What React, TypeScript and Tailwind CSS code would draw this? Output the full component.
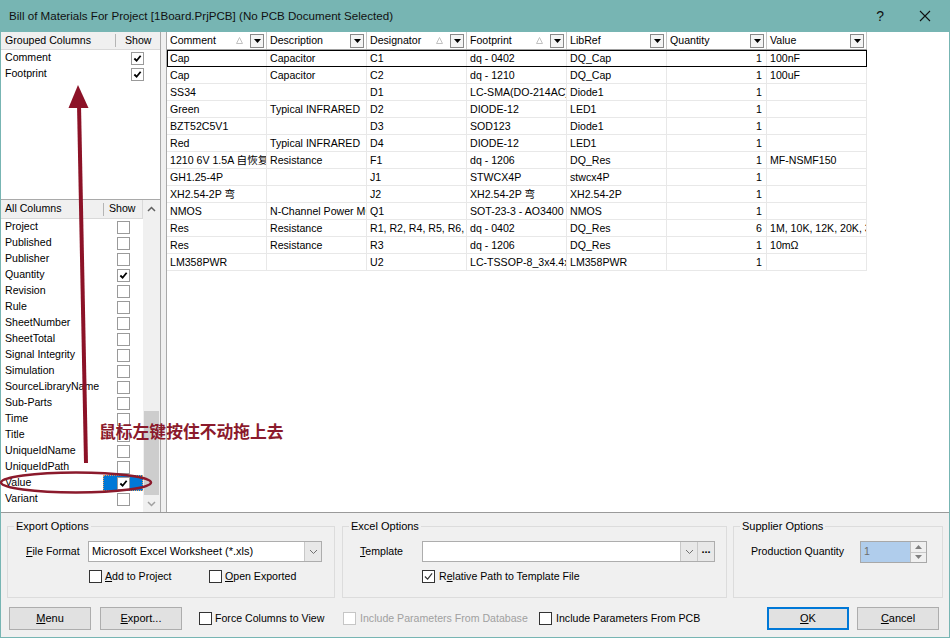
import React from "react";

const UI = "font-['Liberation_Sans','Noto_Sans_CJK_SC',Arial,sans-serif]";

const Check = ({ w = 9 }: { w?: number }) => (
  <svg width={w} height={w} viewBox="0 0 10 10">
    <path d="M1.5 5 L4 7.5 L8.5 2" fill="none" stroke="#000" strokeWidth="2" />
  </svg>
);

// small list checkbox (column chooser panels)
const ListBox = ({ checked }: { checked?: boolean }) => (
  <span className="flex h-[13px] w-[13px] items-center justify-center border border-[#9a9a9a] bg-white">
    {checked && <Check />}
  </span>
);

// dialog checkbox
const Box = ({ checked, disabled }: { checked?: boolean; disabled?: boolean }) => (
  <span
    className={
      disabled
        ? "flex h-[13px] w-[13px] shrink-0 items-center justify-center border border-[#c6c6c6] bg-white"
        : "flex h-[13px] w-[13px] shrink-0 items-center justify-center border border-[#333] bg-white"
    }
  >
    {checked && (
      <svg width="9" height="9" viewBox="0 0 10 10">
        <path d="M1 5 L4 8 L9 1.5" fill="none" stroke="#333" strokeWidth="1.3" />
      </svg>
    )}
  </span>
);

const Chevron = () => (
  <svg width="9" height="6" viewBox="0 0 9 6">
    <path d="M1 1 L4.5 4.5 L8 1" fill="none" stroke="#707070" strokeWidth="1" />
  </svg>
);

const grouped = [
  { name: "Comment", show: true },
  { name: "Footprint", show: true },
];

const allCols = [
  { name: "Project" },
  { name: "Published" },
  { name: "Publisher" },
  { name: "Quantity", show: true },
  { name: "Revision" },
  { name: "Rule" },
  { name: "SheetNumber" },
  { name: "SheetTotal" },
  { name: "Signal Integrity" },
  { name: "Simulation" },
  { name: "SourceLibraryName" },
  { name: "Sub-Parts" },
  { name: "Time" },
  { name: "Title" },
  { name: "UniqueIdName" },
  { name: "UniqueIdPath" },
  { name: "Value", show: true, selected: true },
  { name: "Variant" },
];

const headers = [
  { name: "Comment", sort: true },
  { name: "Description" },
  { name: "Designator", sort: true },
  { name: "Footprint", sort: true },
  { name: "LibRef" },
  { name: "Quantity" },
  { name: "Value" },
];

const rows = [
  ["Cap", "Capacitor", "C1", "dq - 0402", "DQ_Cap", "1", "100nF"],
  ["Cap", "Capacitor", "C2", "dq - 1210", "DQ_Cap", "1", "100uF"],
  ["SS34", "", "D1", "LC-SMA(DO-214AC)", "Diode1", "1", ""],
  ["Green", "Typical INFRARED", "D2", "DIODE-12", "LED1", "1", ""],
  ["BZT52C5V1", "", "D3", "SOD123", "Diode1", "1", ""],
  ["Red", "Typical INFRARED", "D4", "DIODE-12", "LED1", "1", ""],
  ["1210 6V 1.5A 自恢复保险丝", "Resistance", "F1", "dq - 1206", "DQ_Res", "1", "MF-NSMF150"],
  ["GH1.25-4P", "", "J1", "STWCX4P", "stwcx4P", "1", ""],
  ["XH2.54-2P 弯", "", "J2", "XH2.54-2P 弯", "XH2.54-2P", "1", ""],
  ["NMOS", "N-Channel Power MOSFET", "Q1", "SOT-23-3 - AO3400", "NMOS", "1", ""],
  ["Res", "Resistance", "R1, R2, R4, R5, R6, R7", "dq - 0402", "DQ_Res", "6", "1M, 10K, 12K, 20K, 3K"],
  ["Res", "Resistance", "R3", "dq - 1206", "DQ_Res", "1", "10mΩ"],
  ["LM358PWR", "", "U2", "LC-TSSOP-8_3x4.4x0.65", "LM358PWR", "1", ""],
];

const Button = ({ children, primary }: { children: React.ReactNode; primary?: boolean }) => (
  <button
    className={
      primary
        ? "flex h-[23px] w-[82px] items-center justify-center border-2 border-[#0078d7] bg-[#e1e1e1] text-[11px] text-black"
        : "flex h-[23px] w-[82px] items-center justify-center border border-[#adadad] bg-[#e1e1e1] text-[11px] text-black"
    }
  >
    {children}
  </button>
);

export default function App() {
  return (
    <div className={`relative flex h-[638px] w-[950px] flex-col bg-[#77b5b3] text-[10.6px] text-black ${UI}`}>
      {/* Title bar */}
      <div className="flex h-[32px] shrink-0 items-center pl-[9px]">
        <span className="text-[11.6px] text-[#111]">
          Bill of Materials For Project [1Board.PrjPCB] (No PCB Document Selected)
        </span>
        <span className="ml-auto mr-[35px] text-[14px] text-[#111]">?</span>
        <span className="mr-[19px] flex h-[12px] w-[12px] items-center justify-center">
          <svg width="12" height="12" viewBox="0 0 12 12">
            <path d="M1 1 L11 11 M11 1 L1 11" stroke="#111" strokeWidth="1.1" />
          </svg>
        </span>
      </div>

      <div className="mx-[1px] mb-[1px] flex flex-1 flex-col bg-[#f0f0f0]">
        {/* Top area */}
        <div className="flex h-[481px] shrink-0 border-b border-[#9a9a9a]">
          {/* Left column chooser */}
          <div className="flex w-[160px] shrink-0 flex-col border-r border-[#a9a9a9]">
            <div className="h-[168px] shrink-0 border-b border-[#a9a9a9] bg-white">
              <div className="flex h-[18px] items-center border-b border-[#d9d9d9] bg-[#f0f0f0]">
                <span className="w-[114px] pl-[4px]">Grouped Columns</span>
                <span className="h-[13px] w-px bg-[#b5b5b5]" />
                <span className="flex-1 pl-[9px]">Show</span>
              </div>
              {grouped.map((g) => (
                <div key={g.name} className="flex h-[16px] items-center">
                  <span className="w-[114px] pl-[4px]">{g.name}</span>
                  <span className="flex flex-1 justify-center">
                    <ListBox checked={g.show} />
                  </span>
                </div>
              ))}
            </div>

            <div className="flex flex-1 bg-white">
              <div className="w-[142px] shrink-0">
                <div className="flex h-[19px] items-center border-b border-[#d9d9d9] bg-[#f0f0f0]">
                  <span className="w-[102px] pl-[4px]">All Columns</span>
                  <span className="h-[13px] w-px bg-[#b5b5b5]" />
                  <span className="flex-1 pl-[5px]">Show</span>
                  <span className="h-[18px] w-px bg-[#d9d9d9]" />
                </div>
                {allCols.map((c) => (
                  <div key={c.name} className="flex h-[16px] items-center">
                    <span className="w-[102px] whitespace-nowrap pl-[4px]">{c.name}</span>
                    <span
                      className={
                        c.selected
                          ? "flex h-[16px] flex-1 items-center justify-center border border-dotted border-[#e8a060] bg-[#0078d7]"
                          : "flex h-[16px] flex-1 items-center justify-center"
                      }
                    >
                      <ListBox checked={c.show} />
                    </span>
                  </div>
                ))}
              </div>
              {/* scrollbar */}
              <div className="flex w-[17px] shrink-0 flex-col bg-[#f0f0f0]">
                <div className="flex h-[17px] items-center justify-center">
                  <svg width="9" height="6" viewBox="0 0 9 6">
                    <path d="M1 5 L4.5 1.5 L8 5" fill="none" stroke="#606060" strokeWidth="1.5" />
                  </svg>
                </div>
                <div className="h-[194px]" />
                <div className="mx-[1px] h-[84px] bg-[#cdcdcd]" />
                <div className="flex flex-1 items-center justify-center">
                  <svg width="9" height="6" viewBox="0 0 9 6">
                    <path d="M1 1 L4.5 4.5 L8 1" fill="none" stroke="#a0a0a0" strokeWidth="1.5" />
                  </svg>
                </div>
              </div>
            </div>
          </div>

          <div className="w-[5px] shrink-0 bg-[#f0f0f0]" />

          {/* BOM grid */}
          <div className="flex-1 overflow-hidden border-l border-[#a9a9a9] bg-white">
            <div className="flex h-[18px] w-[700px] border-b border-[#a0a0a0] bg-white">
              {headers.map((h) => (
                <div key={h.name} className="flex w-[100px] shrink-0 items-center border-r border-[#c8c8c8] pl-[3px]">
                  <span className="flex-1 whitespace-nowrap">{h.name}</span>
                  {h.sort && (
                    <svg className="mr-[7px]" width="7" height="7" viewBox="0 0 7 7">
                      <path d="M0.5 6.5 L3.5 0.5 L6.5 6.5 Z" fill="none" stroke="#c0c0c0" strokeWidth="1" />
                    </svg>
                  )}
                  <span className="mr-[2px] flex h-[14px] w-[14px] items-center justify-center border border-[#8a8a8a] bg-[#f4f4f4]">
                    <svg width="7" height="4" viewBox="0 0 7 4">
                      <path d="M0 0 L7 0 L3.5 4 Z" fill="#000" />
                    </svg>
                  </span>
                </div>
              ))}
            </div>
            {rows.map((r, i) => (
              <div
                key={i}
                className={
                  i === 0
                    ? "flex h-[17px] w-[700px] border-b border-[#e8e8e8] outline outline-1 -outline-offset-1 outline-black"
                    : "flex h-[17px] w-[700px] border-b border-[#e8e8e8]"
                }
              >
                {r.map((cell, j) => (
                  <div
                    key={j}
                    className={
                      j === 5
                        ? "w-[100px] shrink-0 overflow-hidden whitespace-nowrap border-r border-[#e8e8e8] pr-[4px] text-right leading-[16px]"
                        : "w-[100px] shrink-0 overflow-hidden whitespace-nowrap border-r border-[#e8e8e8] pl-[3px] leading-[16px]"
                    }
                  >
                    {cell}
                  </div>
                ))}
              </div>
            ))}
          </div>
        </div>

        {/* Options */}
        <div className="mt-[6px] flex h-[79px] shrink-0">
          <fieldset className="ml-[6px] h-[79px] w-[328px] border border-[#dcdcdc]">
            <legend className="ml-[6px] px-[2px] text-[11px] leading-[15px]">Export Options</legend>
            <div className="mt-[7px] flex h-[21px] items-center">
              <span className="ml-[18px] w-[62px]">
                <u>F</u>ile Format
              </span>
              <div className="flex h-[21px] w-[234px] items-center border border-[#adadad] bg-white">
                <span className="flex-1 pl-[3px] text-[11px]">Microsoft Excel Worksheet (*.xls)</span>
                <span className="flex h-full w-[17px] items-center justify-center border-l border-[#c8c8c8] bg-[#e8e8e8]">
                  <Chevron />
                </span>
              </div>
            </div>
            <div className="mt-[7px] flex h-[16px] items-center">
              <span className="ml-[81px] flex w-[120px] items-center gap-[3px]">
                <Box />
                <span>
                  <u>A</u>dd to Project
                </span>
              </span>
              <span className="flex items-center gap-[3px]">
                <Box />
                <span>
                  <u>O</u>pen Exported
                </span>
              </span>
            </div>
          </fieldset>

          <fieldset className="ml-[7px] h-[79px] w-[385px] border border-[#dcdcdc]">
            <legend className="ml-[6px] px-[2px] text-[11px] leading-[15px]">Excel Options</legend>
            <div className="mt-[7px] flex h-[21px] items-center">
              <span className="ml-[17px] w-[62px]">
                <u>T</u>emplate
              </span>
              <div className="flex h-[21px] w-[293px] items-center border border-[#adadad] bg-white">
                <span className="flex-1" />
                <span className="flex h-full w-[17px] items-center justify-center border-l border-[#c8c8c8] bg-[#e8e8e8]">
                  <Chevron />
                </span>
                <span className="flex h-full w-[17px] items-center justify-center border-l border-[#c8c8c8] bg-[#e8e8e8] pb-[4px] text-[11px] font-bold leading-none">
                  ...
                </span>
              </div>
            </div>
            <div className="mt-[7px] flex h-[16px] items-center">
              <span className="ml-[79px] flex items-center gap-[4px]">
                <Box checked />
                <span>
                  R<u>e</u>lative Path to Template File
                </span>
              </span>
            </div>
          </fieldset>

          <fieldset className="ml-[6px] h-[79px] w-[210px] border border-[#dcdcdc]">
            <legend className="ml-[6px] px-[2px] text-[11px] leading-[15px]">Supplier Options</legend>
            <div className="mt-[7px] flex h-[22px] items-center">
              <span className="ml-[17px] w-[109px]">Production Quantity</span>
              <div className="flex h-[22px] w-[67px] items-center border border-[#a8a8a8] bg-[#b0cdec]">
                <span className="flex-1 pl-[3px] text-[#6d6d6d]">1</span>
                <span className="flex h-full w-[16px] flex-col border-l border-[#c0c0c0] bg-[#f0f0f0]">
                  <span className="flex flex-1 items-center justify-center border-b border-[#c8c8c8]">
                    <svg width="7" height="4" viewBox="0 0 7 4">
                      <path d="M0 4 L7 4 L3.5 0 Z" fill="#808080" />
                    </svg>
                  </span>
                  <span className="flex flex-1 items-center justify-center">
                    <svg width="7" height="4" viewBox="0 0 7 4">
                      <path d="M0 0 L7 0 L3.5 4 Z" fill="#808080" />
                    </svg>
                  </span>
                </span>
              </div>
            </div>
          </fieldset>
        </div>

        {/* Buttons */}
        <div className="mt-[9px] flex h-[23px] items-center">
          <span className="ml-[8px]">
            <Button>
              <u>M</u>enu
            </Button>
          </span>
          <span className="ml-[9px]">
            <Button>
              <u>E</u>xport...
            </Button>
          </span>
          <span className="ml-[17px] flex w-[144px] items-center gap-[3px]">
            <Box />
            <span>Force Columns to View</span>
          </span>
          <span className="flex w-[196px] items-center gap-[4px] text-[#a0a0a0]">
            <Box disabled />
            <span>Include Parameters From Database</span>
          </span>
          <span className="flex items-center gap-[4px]">
            <Box />
            <span>Include Parameters From PCB</span>
          </span>
          <span className="ml-auto">
            <Button primary>
              <u>O</u>K
            </Button>
          </span>
          <span className="ml-[8px] mr-[10px]">
            <Button>
              <u>C</u>ancel
            </Button>
          </span>
        </div>
      </div>

      {/* Drag hint annotation */}
      <svg className="pointer-events-none absolute left-0 top-0" width="950" height="638">
        <ellipse cx="76" cy="482.5" rx="75" ry="10" fill="none" stroke="#8b1a2c" strokeWidth="2.5" />
        <line x1="86" y1="463" x2="79" y2="104" stroke="#8c1227" strokeWidth="4" />
        <polygon points="78,85 68.5,108 88.5,108" fill="#8c1227" />
      </svg>
      <span className="pointer-events-none absolute left-[99px] top-[419px] font-['Noto_Sans_CJK_SC',sans-serif] text-[16.8px] font-bold text-[#8b1a2c]">
        鼠标左键按住不动拖上去
      </span>
    </div>
  );
}
